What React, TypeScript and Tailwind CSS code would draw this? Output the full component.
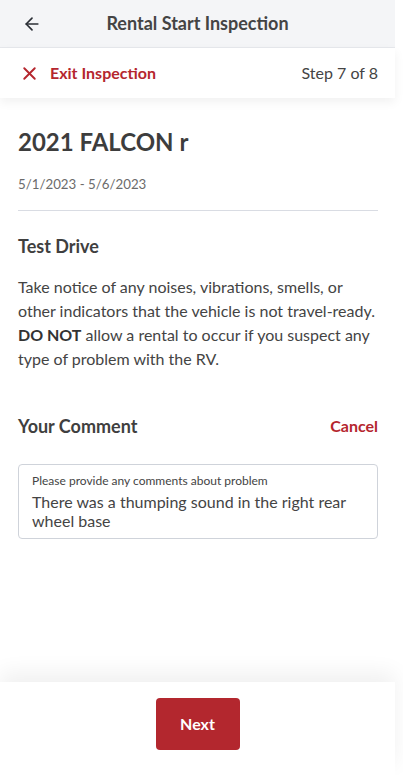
import React from 'react';
import { ArrowLeft, X } from 'lucide-react';

export default function App() {
  return (
    <div className="w-[395px] h-[775px] flex flex-col bg-white text-[#3f3f3f] font-['Lato','Open_Sans',sans-serif]">
      <div className="h-[48px] shrink-0 flex items-center px-[22px] bg-[#f4f5f7] border-b border-[#e6e8ec] relative">
        <ArrowLeft className="w-[20px] h-[20px] text-[#2b2f36]" strokeWidth={2} />
        <h1 className="absolute inset-x-0 text-center text-[18px] font-bold text-[#444] pointer-events-none">
          Rental Start Inspection
        </h1>
      </div>

      <div className="h-[50px] shrink-0 flex items-center justify-between pl-[19px] pr-[17px] bg-white relative z-10 shadow-[0_4px_10px_rgba(0,0,0,0.06)]">
        <div className="flex items-center gap-[10px] text-[#b5262e]">
          <X className="w-[21px] h-[21px]" strokeWidth={2.2} />
          <span className="text-[16px] font-bold">Exit Inspection</span>
        </div>
        <span className="text-[16px] text-[#444]">Step 7 of 8</span>
      </div>

      <main className="flex-1 px-[18px] pr-[17px] pt-[28px]">
        <h2 className="text-[24px] font-bold leading-[32px] text-[#3d3d3d]">2021 FALCON r</h2>
        <p className="mt-[17px] text-[13.3px] text-[#6b6b6b]">5/1/2023 - 5/6/2023</p>
        <div className="mt-[15px] h-px bg-[#d9dce3]" />

        <h3 className="mt-[23px] text-[18px] font-bold leading-[24px]">Test Drive</h3>
        <p className="mt-[17px] text-[16px] leading-[24px] text-[#444]">
          Take notice of any noises, vibrations, smells, or other indicators that the vehicle is not travel-ready.{' '}
          <span className="font-bold text-[#333]">DO NOT</span> allow a rental to occur if you suspect any type of problem
          with the RV.
        </p>

        <div className="mt-[43px] flex items-center justify-between">
          <h3 className="text-[18px] font-bold leading-[24px]">Your Comment</h3>
          <button className="text-[16px] font-bold text-[#b5262e]">Cancel</button>
        </div>

        <div className="mt-[26px] h-[75px] rounded-[4px] border border-[#cfd3da] pl-[13px] pr-[10px] pt-[7px]">
          <div className="text-[12px] leading-[18px] text-[#444]">Please provide any comments about problem</div>
          <div className="mt-[2px] text-[16px] leading-[19px] text-[#444]">
            There was a thumping sound in the right rear wheel base
          </div>
        </div>
      </main>

      <footer className="h-[93px] shrink-0 flex justify-center pt-[16px] bg-white shadow-[0_-10px_20px_rgba(0,0,0,0.06)]">
        <button className="w-[84px] h-[52px] rounded-[4px] bg-[#b3272e] text-white text-[16px] font-bold">Next</button>
      </footer>
    </div>
  );
}
